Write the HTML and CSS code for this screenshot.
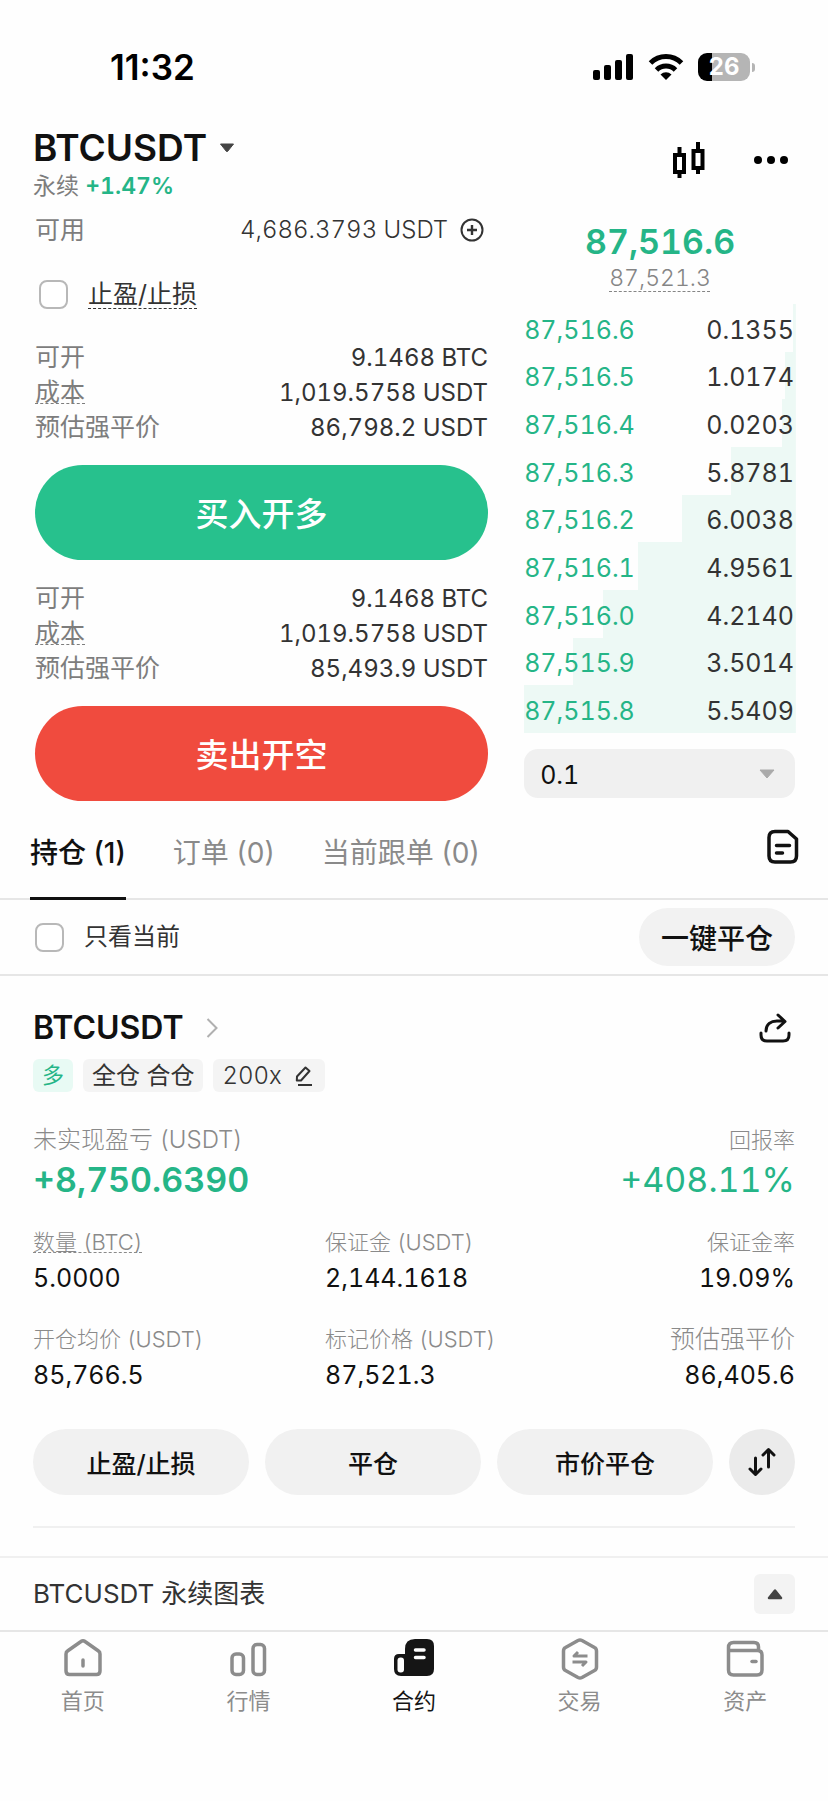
FILE: index.html
```html
<!DOCTYPE html>
<html lang="zh-CN">
<head>
<meta charset="utf-8">
<meta name="viewport" content="width=device-width, initial-scale=1">
<title>BTCUSDT 永续</title>
<link rel="stylesheet" href="styles.css">
</head>
<body>
<div class="status">
  <span class="status-time">11:32</span>
  <div class="status-icons">
    <svg width="42" height="28" viewBox="0 0 42 28"><rect x="1" y="17" width="7" height="10" rx="2"/><rect x="12" y="12" width="7" height="15" rx="2"/><rect x="23" y="7" width="7" height="20" rx="2"/><rect x="34" y="1" width="7" height="26" rx="2"/></svg>
    <svg width="36" height="28" viewBox="0 0 36 28"><path d="M2.500 10a22 22 0 0 1 31 0M8.500 17a13.500 13.500 0 0 1 19 0" fill="none" stroke="#000" stroke-width="5"/><path d="M18 27l-5.500-5.500a8 8 0 0 1 11 0z"/></svg>
    <div class="battery"><span class="battery-body">26</span><span class="battery-cap"></span></div>
  </div>
</div>

<header class="header">
  <div>
    <button class="pair" type="button">BTCUSDT
      <svg width="16" height="10" viewBox="0 0 16 10"><path d="M1.500 1h13L8.700 8.300q-.7.800-1.400 0z" fill="#444" stroke="#444" stroke-linejoin="round"/></svg>
    </button>
    <div class="pair-sub">永续 <b class="up">+1.47%</b></div>
  </div>
  <div class="header-actions">
    <button class="icon-btn" type="button" aria-label="K线">
      <svg width="34" height="36" viewBox="0 0 34 36" fill="none" stroke="#000" stroke-width="4"><path d="M3 13h9v17H3zM7.500 5v8M7.500 30v6M21.500 9h9v17h-9zM26 0v9M26 26v6"/></svg>
    </button>
    <button class="icon-btn" type="button" aria-label="更多">
      <svg width="36" height="10" viewBox="0 0 36 10"><circle cx="5" cy="5" r="4"/><circle cx="18" cy="5" r="4"/><circle cx="31" cy="5" r="4"/></svg>
    </button>
  </div>
</header>

<main>
<section class="trade">
  <div class="order">
    <div class="row avail"><span class="muted">可用</span>
      <span class="avail-value">4,686.3793 USDT
        <svg width="24" height="24" viewBox="0 0 24 24" fill="none" stroke="#333" stroke-width="2"><circle cx="12" cy="12" r="10.500"/><path d="M7 12h10M12 7v10" stroke-width="2.400"/></svg>
      </span>
    </div>
    <label class="check tpsl"><input type="checkbox"><span class="dashed">止盈/止损</span></label>
    <dl class="info">
      <div class="row"><dt>可开</dt><dd>9.1468 BTC</dd></div>
      <div class="row"><dt><span class="dashed tight">成本</span></dt><dd>1,019.5758 USDT</dd></div>
      <div class="row"><dt>预估强平价</dt><dd>86,798.2 USDT</dd></div>
    </dl>
    <button class="submit buy" type="button">买入开多</button>
    <dl class="info">
      <div class="row"><dt>可开</dt><dd>9.1468 BTC</dd></div>
      <div class="row"><dt><span class="dashed tight">成本</span></dt><dd>1,019.5758 USDT</dd></div>
      <div class="row"><dt>预估强平价</dt><dd>85,493.9 USDT</dd></div>
    </dl>
    <button class="submit sell" type="button">卖出开空</button>
  </div>
  <div class="book">
    <div class="last up">87,516.6</div>
    <div class="mark"><span class="dashed">87,521.3</span></div>
    <table class="bids">
      <tr style="--depth:1%"><td>87,516.6</td><td>0.1355</td></tr>
      <tr style="--depth:4%"><td>87,516.5</td><td>1.0174</td></tr>
      <tr style="--depth:5%"><td>87,516.4</td><td>0.0203</td></tr>
      <tr style="--depth:24%"><td>87,516.3</td><td>5.8781</td></tr>
      <tr style="--depth:42%"><td>87,516.2</td><td>6.0038</td></tr>
      <tr style="--depth:58%"><td>87,516.1</td><td>4.9561</td></tr>
      <tr style="--depth:71%"><td>87,516.0</td><td>4.2140</td></tr>
      <tr style="--depth:82%"><td>87,515.9</td><td>3.5014</td></tr>
      <tr style="--depth:100%"><td>87,515.8</td><td>5.5409</td></tr>
    </table>
    <div class="step">
      <select aria-label="价格精度"><option>0.1</option></select>
      <svg class="step-arrow" width="16" height="10" viewBox="0 0 16 10"><path d="M1 1h14L8 9z" fill="#aaa" stroke="#aaa" stroke-linejoin="round"/></svg>
    </div>
  </div>
</section>

<nav class="tabs">
  <button class="tab active" type="button">持仓 (1)</button>
  <button class="tab" type="button">订单 (0)</button>
  <button class="tab" type="button">当前跟单 (0)</button>
  <button class="icon-btn history" type="button" aria-label="历史">
    <svg width="32" height="36" viewBox="0 0 32 36" fill="none" stroke="#111" stroke-width="3.500" stroke-linecap="round" stroke-linejoin="round"><path d="M8 2.500h13l8.500 7.500v17q0 6-6 6H8q-6 0-6-6V8.500q0-6 6-6z"/><path d="M9.500 16.500h13M9.500 24h6"/></svg>
  </button>
</nav>

<div class="filter">
  <label class="check"><input type="checkbox"><span>只看当前</span></label>
  <button class="close-all" type="button">一键平仓</button>
</div>

<section class="position">
  <div class="row">
    <a class="symbol" href="#">BTCUSDT
      <svg width="12" height="20" viewBox="0 0 12 20" fill="none" stroke="#b0b0b0" stroke-width="2"><path d="M1.500 1l9 9-9 9"/></svg>
    </a>
    <button class="icon-btn" type="button" aria-label="分享">
      <svg width="32" height="30" viewBox="0 0 32 30" fill="none" stroke="#111" stroke-width="3" stroke-linecap="round" stroke-linejoin="round"><path d="M7 18C7 11 12 8 18 8h7M19 2l7 6.500-7 6.500M2 20v2q0 6 6 6h16q6 0 6-6v-2"/></svg>
    </button>
  </div>
  <div class="tags">
    <span class="tag long">多</span>
    <span class="tag">全仓 合仓</span>
    <button class="tag lever" type="button">200x
      <svg width="18" height="20" viewBox="0 0 18 20" fill="none" stroke="#333" stroke-width="2" stroke-linejoin="round"><path d="M2 10.500l8.500-9 4 3.500-8.500 9.500H1.800zM3 19h14"/></svg>
    </button>
  </div>
  <div class="pnl">
    <div><div class="pnl-label">未实现盈亏 (USDT)</div><div class="pnl-value bold">+8,750.6390</div></div>
    <div class="end"><div class="stat-label">回报率</div><div class="pnl-value">+408.11%</div></div>
  </div>
  <div class="stats">
    <div><div class="stat-label"><span class="dashed tight">数量 (BTC)</span></div><div class="stat-value">5.0000</div></div>
    <div><div class="stat-label">保证金 (USDT)</div><div class="stat-value">2,144.1618</div></div>
    <div class="end"><div class="stat-label">保证金率</div><div class="stat-value">19.09%</div></div>
    <div><div class="stat-label">开仓均价 (USDT)</div><div class="stat-value">85,766.5</div></div>
    <div><div class="stat-label">标记价格 (USDT)</div><div class="stat-value">87,521.3</div></div>
    <div class="end"><div class="stat-label large">预估强平价</div><div class="stat-value">86,405.6</div></div>
  </div>
  <div class="actions">
    <button class="pill" type="button">止盈/止损</button>
    <button class="pill" type="button">平仓</button>
    <button class="pill" type="button">市价平仓</button>
    <button class="pill round" type="button" aria-label="反手">
      <svg width="30" height="30" viewBox="0 0 30 30" fill="none" stroke="#111" stroke-width="3" stroke-linecap="round" stroke-linejoin="round"><path d="M8.500 11v16M3 22l5.500 5.500L14 22M21.500 20V3M16 8l5.500-5.500L27 8"/></svg>
    </button>
  </div>
</section>

<div class="chart-bar">
  <span>BTCUSDT 永续图表</span>
  <button class="expand" type="button" aria-label="展开">
    <svg width="16" height="11" viewBox="0 0 16 11"><path d="M8 1.500l6 7.500H2z" fill="#444" stroke="#444" stroke-width="2.500" stroke-linejoin="round"/></svg>
  </button>
</div>
</main>

<nav class="bottom">
  <a href="#"><svg width="40" height="40" viewBox="0 0 40 40" fill="none" stroke="#8c8c8c" stroke-width="3.500" stroke-linecap="round" stroke-linejoin="round"><path d="M18 3.500q2-1.500 4 0L35.500 13q1.500 1 1.500 3v17q0 3.500-3.500 3.500h-27Q3 36.500 3 33V16q0-2 1.500-3z"/><path d="M20 22v6"/></svg>首页</a>
  <a href="#"><svg width="40" height="40" viewBox="0 0 40 40" fill="none" stroke="#8c8c8c" stroke-width="3.500"><rect x="4" y="16" width="11.500" height="20.500" rx="4"/><rect x="25" y="6.500" width="11.500" height="30" rx="4"/></svg>行情</a>
  <a href="#" class="current"><svg width="42" height="40" viewBox="0 0 42 40"><path d="M22 1h12q7 0 7 7v23q0 7-7 7H8q-7 0-7-7V21q0-5 5-5h6V11Q12 1 22 1z" fill="#151515"/><rect x="4.500" y="19.500" width="6.500" height="15" rx="3" fill="#fff"/><path d="M22.500 12h8.500M22.500 19.500h8.500" stroke="#fff" stroke-width="3.500" stroke-linecap="round"/></svg>合约</a>
  <a href="#"><svg width="40" height="42" viewBox="0 0 40 42" fill="none" stroke="#8c8c8c" stroke-width="3.500" stroke-linejoin="round"><path d="M18 2.500q2-1 4 0l12.500 7q2 1 2 3.500v16q0 2.500-2 3.500l-12.500 7q-2 1-4 0l-12.500-7q-2-1-2-3.500V13q0-2.500 2-3.500z"/><path d="M27.500 18H14l4-4M12.500 24H26l-4 4" stroke-width="3"/></svg>交易</a>
  <a href="#"><svg width="40" height="40" viewBox="0 0 40 40" fill="none" stroke="#8c8c8c" stroke-width="3.500" stroke-linecap="round"><path d="M3.500 11V9.500q0-5 5-5H29q4.500 0 4.500 4.500v3.500M3.500 12.500h29q4.500 0 4.500 4.500v15q0 5-5 5H8.500q-5 0-5-5V11"/><path d="M27 23.500h4"/></svg>资产</a>
</nav>
</body>
</html>
```

FILE: styles.css
```css
* { box-sizing: border-box; }

body {
  margin: 0;
  background: #fefefe;
  color: #333;
  font-family: Inter, "Noto Sans CJK SC", sans-serif;
  font-size: 24px;
  font-variant-numeric: tabular-nums;
  line-height: 36px;
}

button, select, input { font: inherit; font-variant-numeric: inherit; color: inherit; margin: 0; }
button { border: 0; padding: 0; background: none; }
a { color: inherit; text-decoration: none; }
svg { display: block; flex: none; }
dl, dd { margin: 0; }

.up { color: #25b587; }
.muted, dt { color: #7d7d7d; font-size: 25px; }
.end { text-align: right; }
.row { display: flex; align-items: center; justify-content: space-between; }
.icon-btn { display: flex; }

.dashed {
  text-decoration: underline dashed 1px;
  text-underline-offset: 5px;
  text-decoration-skip-ink: none;
}
.dashed.tight { text-underline-offset: 2px; }

/* status bar */
.status {
  display: flex;
  justify-content: space-between;
  align-items: center;
  height: 88px;
  padding: 46px 73px 0 110px;
  color: #000;
}
.status-time { font-size: 35px; font-weight: 600; font-variant-numeric: normal; }
.status-icons { display: flex; align-items: center; gap: 14px; }
.battery { display: flex; align-items: center; gap: 2px; }
.battery-body {
  width: 52px;
  border-radius: 9px;
  background: linear-gradient(to right, #000 26%, #b5b5b5 26%);
  color: #fff;
  font-size: 24px;
  font-weight: 700;
  line-height: 28px;
  text-align: center;
}
.battery-cap { width: 3px; height: 9px; border-radius: 0 3px 3px 0; background: #b5b5b5; }

/* header */
.header {
  display: flex;
  justify-content: space-between;
  padding: 40px 39px 0 33px;
}
.pair {
  display: flex;
  align-items: center;
  gap: 12px;
  color: #111;
  font-size: 37px;
  font-weight: 600;
  line-height: 40px;
}
.pair-sub { color: #7d7d7d; font-size: 23px; }
.pair-sub b { font-weight: 600; }
.header-actions { display: flex; align-items: center; gap: 47px; height: 64px; }

/* order form and book */
.trade {
  display: grid;
  grid-template-columns: 5fr 3fr;
  gap: 36px;
  padding: 8px 32px 0 35px;
}
.avail-value { display: flex; align-items: center; gap: 12px; padding-right: 4px; font-weight: 300; }
.check { display: flex; align-items: center; gap: 20px; }
.check input {
  appearance: none;
  width: 29px;
  height: 29px;
  border: 2px solid #b8b8b8;
  border-radius: 8px;
  background: #fff;
}
.tpsl { margin-top: 28px; padding-left: 4px; font-size: 25px; }
.info { margin: 28px 0 20px; line-height: 35px; }
.submit + .info { margin-top: 21px; }
.submit {
  display: block;
  width: 100%;
  height: 95px;
  padding-top: 3px;
  border-radius: 48px;
  color: #fff;
  font-size: 33px;
  font-weight: 500;
}
.buy { background: #27c18d; }
.sell { background: #f04b3e; }

.last { padding-top: 8px; font-size: 34px; font-weight: 600; line-height: 44px; text-align: center; }
.mark { color: #858585; font-size: 23px; font-weight: 300; line-height: 28px; text-align: center; }
.bids { width: 100%; height: 429px; margin-top: 12px; border-collapse: collapse; font-size: 25px; }
.bids tr { background: linear-gradient(to left, #edf9f5 var(--depth), transparent var(--depth)); }
.bids td { padding: 4px 0 0; color: #25b587; }
.bids td + td { padding-right: 2px; color: #333; text-align: right; }
.step { position: relative; margin: 16px 1px 0 0; font-size: 25px; }
.step select {
  appearance: none;
  display: block;
  width: 100%;
  height: 49px;
  padding: 2px 16px 0;
  border: 0;
  border-radius: 14px;
  background: #f0f0f0;
  color: #111;
}
.step-arrow { position: absolute; top: 20px; right: 20px; pointer-events: none; }

/* tabs */
.tabs {
  display: flex;
  align-items: flex-start;
  gap: 47px;
  padding: 32px 29px 0 30px;
  border-bottom: 2px solid #e6e6e6;
  font-variant-numeric: normal;
}
.tab {
  margin-bottom: -2px;
  padding-bottom: 24px;
  border-bottom: 3px solid transparent;
  color: #8a8a8a;
  font-size: 28px;
  line-height: 40px;
}
.tab.active { border-color: #111; color: #111; font-weight: 500; }
.history { margin-left: auto; margin-top: -4px; }

.filter {
  display: flex;
  align-items: center;
  justify-content: space-between;
  padding: 8px 33px 8px 35px;
  border-bottom: 2px solid #e6e6e6;
}
.close-all {
  height: 58px;
  padding: 3px 22px 0;
  border-radius: 29px;
  background: #f2f2f2;
  color: #111;
  font-size: 28px;
  font-weight: 500;
}

/* position card */
.position { margin: 0 33px; padding-top: 32px; padding-bottom: 31px; border-bottom: 2px solid #f0f0f0; }
.symbol {
  display: flex;
  align-items: center;
  gap: 22px;
  color: #111;
  font-size: 32px;
  font-weight: 600;
  line-height: 40px;
}
.position .icon-btn { margin-right: 4px; }
.tags { display: flex; gap: 10px; margin-top: 11px; }
.tag {
  display: flex;
  align-items: center;
  gap: 13px;
  padding: 0 9px;
  border-radius: 6px;
  background: #f4f4f4;
  line-height: 33px;
}
.tag.long { background: #e8faf4; color: #25b587; font-size: 22px; }
.tag.lever { padding-right: 12px; font-weight: 300; }
.pnl { display: flex; justify-content: space-between; margin-top: 31px; line-height: 34px; }
.pnl-label { color: #8a8a8a; font-weight: 300; }
.pnl-value { margin-top: 1px; color: #25b587; font-size: 34px; line-height: 44px; }
.bold { font-weight: 600; }
.stats {
  display: grid;
  grid-template-columns: 292fr 270fr 200fr;
  row-gap: 26px;
  margin-top: 23px;
}
.stat-label { color: #8a8a8a; font-size: 22px; font-weight: 300; line-height: 34px; }
.stat-label.large { font-size: 25px; }
.stat-value { padding-top: 1px; color: #111; font-size: 25px; }
.actions { display: flex; gap: 16px; margin-top: 36px; }
.pill {
  flex: 1;
  height: 66px;
  padding-top: 3px;
  border-radius: 33px;
  background: #f1f1f1;
  color: #111;
  font-size: 25px;
  font-weight: 500;
}
.round { display: flex; flex: none; align-items: center; justify-content: center; width: 66px; padding: 0; background: #ebebeb; }

.chart-bar {
  display: flex;
  align-items: center;
  justify-content: space-between;
  margin-top: 28px;
  padding: 16px 33px;
  border-top: 2px solid #f0f0f0;
  border-bottom: 2px solid #e6e6e6;
  font-size: 26px;
  line-height: 40px;
}
.expand {
  display: flex;
  align-items: center;
  justify-content: center;
  width: 41px;
  height: 40px;
  border-radius: 6px;
  background: #f3f3f3;
}

/* bottom navigation */
.bottom { display: grid; grid-template-columns: repeat(5, 1fr); padding-top: 6px; }
.bottom a {
  display: flex;
  flex-direction: column;
  align-items: center;
  justify-content: space-between;
  height: 77px;
  color: #8c8c8c;
  font-size: 22px;
  line-height: 28px;
}
.bottom .current { color: #151515; }
```
